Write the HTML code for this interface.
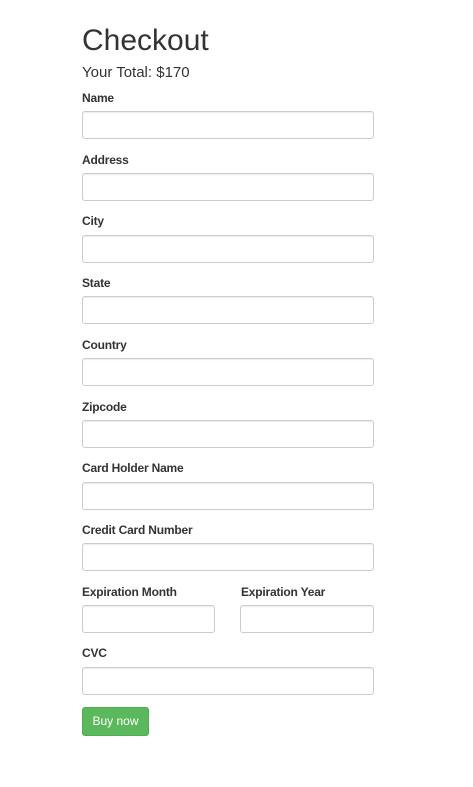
<!DOCTYPE html>
<html><head><meta charset="utf-8"><style>
body{margin:0;background:#fff;width:473px;height:787px;position:relative;font-family:"Liberation Sans",Arial,sans-serif;color:#333;overflow:hidden}
.a{position:absolute}
h1{position:absolute;left:82px;top:23px;margin:0;font-size:30px;font-weight:normal;line-height:36px}
.t{left:82px;top:64px;font-size:15px;line-height:18px}
label{position:absolute;font-size:12px;font-weight:bold;line-height:14px;letter-spacing:-0.2px}
.i{position:absolute;height:26px;border:1px solid #ccc;border-radius:3px;box-shadow:inset 0 1px 1px rgba(0,0,0,.075);background:#fff}
.btn{position:absolute;left:82px;top:707px;width:65px;height:27px;background:#5cb85c;border:1px solid #4cae4c;border-radius:3px;color:#fff;font-size:12px;line-height:27px;text-align:center}
</style></head><body>
<h1>Checkout</h1>
<div class="a t">Your Total: $170</div>

<label style="left:82px;top:91px">Name</label><div class="i" style="left:82px;top:111px;width:290px"></div>
<label style="left:82px;top:153px">Address</label><div class="i" style="left:82px;top:173px;width:290px"></div>
<label style="left:82px;top:214px">City</label><div class="i" style="left:82px;top:235px;width:290px"></div>
<label style="left:82px;top:276px">State</label><div class="i" style="left:82px;top:296px;width:290px"></div>
<label style="left:82px;top:338px">Country</label><div class="i" style="left:82px;top:358px;width:290px"></div>
<label style="left:82px;top:400px">Zipcode</label><div class="i" style="left:82px;top:420px;width:290px"></div>
<label style="left:82px;top:461px">Card Holder Name</label><div class="i" style="left:82px;top:482px;width:290px"></div>
<label style="left:82px;top:523px">Credit Card Number</label><div class="i" style="left:82px;top:543px;width:290px"></div>
<label style="left:82px;top:585px">Expiration Month</label><div class="i" style="left:82px;top:605px;width:131px"></div>
<label style="left:241px;top:585px">Expiration Year</label><div class="i" style="left:240px;top:605px;width:132px"></div>
<label style="left:82px;top:646px">CVC</label><div class="i" style="left:82px;top:667px;width:290px"></div>
<div class="btn">Buy now</div>
</body></html>
